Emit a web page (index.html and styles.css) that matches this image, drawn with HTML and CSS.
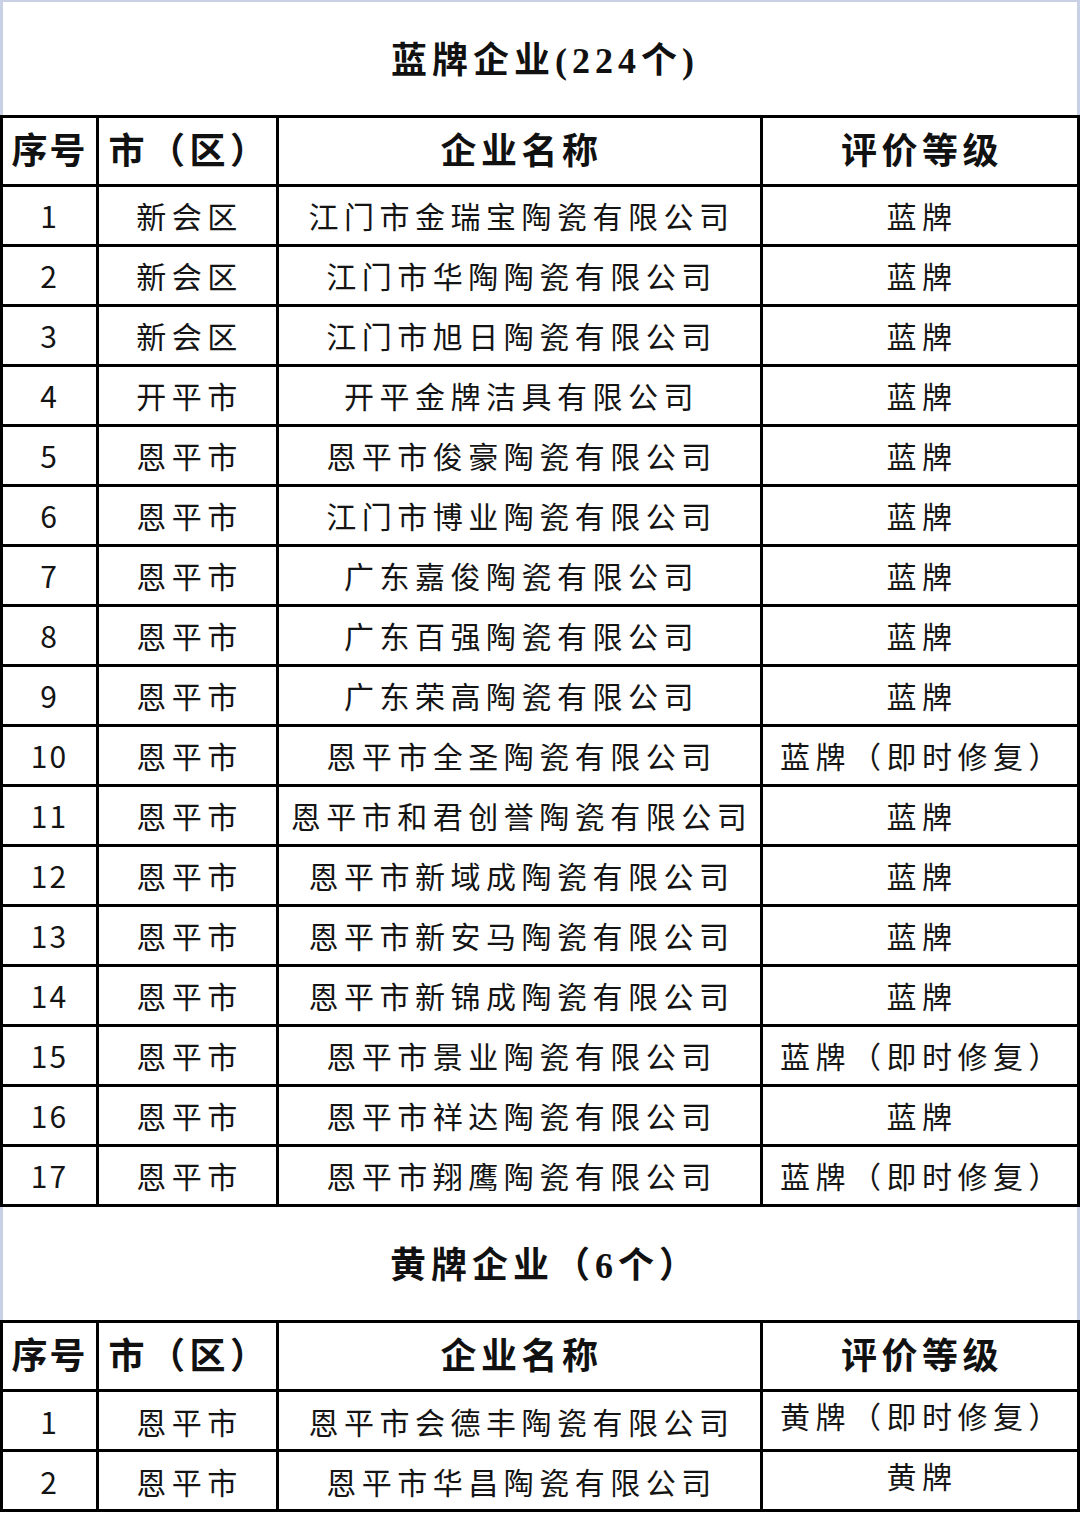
FILE: index.html
```html
<!DOCTYPE html>
<html lang="zh-CN">
<head>
<meta charset="utf-8">
<title>蓝牌企业 / 黄牌企业</title>
<link rel="stylesheet" href="styles.css">
</head>
<body>
<table class="sheet">
  <colgroup>
    <col class="c-no"><col class="c-city"><col class="c-name"><col class="c-grade">
  </colgroup>
  <tbody>
    <tr class="title-row"><td colspan="4" class="title">蓝牌企业(224个)</td></tr>
    <tr class="head-row"><th>序号</th><th>市（区）</th><th>企业名称</th><th>评价等级</th></tr>
    <tr><td class="num">1</td><td>新会区</td><td>江门市金瑞宝陶瓷有限公司</td><td>蓝牌</td></tr>
    <tr><td class="num">2</td><td>新会区</td><td>江门市华陶陶瓷有限公司</td><td>蓝牌</td></tr>
    <tr><td class="num">3</td><td>新会区</td><td>江门市旭日陶瓷有限公司</td><td>蓝牌</td></tr>
    <tr><td class="num">4</td><td>开平市</td><td>开平金牌洁具有限公司</td><td>蓝牌</td></tr>
    <tr><td class="num">5</td><td>恩平市</td><td>恩平市俊豪陶瓷有限公司</td><td>蓝牌</td></tr>
    <tr><td class="num">6</td><td>恩平市</td><td>江门市博业陶瓷有限公司</td><td>蓝牌</td></tr>
    <tr><td class="num">7</td><td>恩平市</td><td>广东嘉俊陶瓷有限公司</td><td>蓝牌</td></tr>
    <tr><td class="num">8</td><td>恩平市</td><td>广东百强陶瓷有限公司</td><td>蓝牌</td></tr>
    <tr><td class="num">9</td><td>恩平市</td><td>广东荣高陶瓷有限公司</td><td>蓝牌</td></tr>
    <tr><td class="num">10</td><td>恩平市</td><td>恩平市全圣陶瓷有限公司</td><td>蓝牌（即时修复）</td></tr>
    <tr><td class="num">11</td><td>恩平市</td><td>恩平市和君创誉陶瓷有限公司</td><td>蓝牌</td></tr>
    <tr><td class="num">12</td><td>恩平市</td><td>恩平市新域成陶瓷有限公司</td><td>蓝牌</td></tr>
    <tr><td class="num">13</td><td>恩平市</td><td>恩平市新安马陶瓷有限公司</td><td>蓝牌</td></tr>
    <tr><td class="num">14</td><td>恩平市</td><td>恩平市新锦成陶瓷有限公司</td><td>蓝牌</td></tr>
    <tr><td class="num">15</td><td>恩平市</td><td>恩平市景业陶瓷有限公司</td><td>蓝牌（即时修复）</td></tr>
    <tr><td class="num">16</td><td>恩平市</td><td>恩平市祥达陶瓷有限公司</td><td>蓝牌</td></tr>
    <tr><td class="num">17</td><td>恩平市</td><td>恩平市翔鹰陶瓷有限公司</td><td>蓝牌（即时修复）</td></tr>
    <tr class="title-row title-row-2"><td colspan="4" class="title">黄牌企业（6个）</td></tr>
    <tr class="head-row"><th>序号</th><th>市（区）</th><th>企业名称</th><th>评价等级</th></tr>
    <tr class="y-row"><td class="num">1</td><td>恩平市</td><td>恩平市会德丰陶瓷有限公司</td><td class="hi">黄牌（即时修复）</td></tr>
    <tr class="y-row"><td class="num">2</td><td>恩平市</td><td>恩平市华昌陶瓷有限公司</td><td class="hi">黄牌</td></tr>
  </tbody>
</table>
</body>
</html>
```

FILE: styles.css
```css
html, body {
  margin: 0;
  padding: 0;
  background: #ffffff;
}

.sheet {
  table-layout: fixed;
  border-collapse: collapse;
  font-family: "Noto Sans CJK SC", "Noto Sans", sans-serif;
  color: #141414;
}

.c-no { width: 96px; }
.c-city { width: 180px; }
.c-name { width: 484px; }
.c-grade { width: 317px; }

.sheet td,
.sheet th {
  border: 3px solid #000;
  padding: 0;
  text-align: center;
  vertical-align: middle;
  white-space: nowrap;
  overflow: visible;
  box-sizing: border-box;
}

.sheet td {
  font-size: 30px;
  font-weight: 400;
  letter-spacing: 5.5px;
  height: 60px;
  line-height: 34px;
  padding-left: 4px;
}

.sheet td.num {
  letter-spacing: 2px;
  padding-left: 0;
}

.sheet .title-row td.title {
  height: 115px;
  border-left: 3px solid #c9d2e4;
  border-right: 3px solid #c9d2e4;
  border-top: 2px solid #c9d2e4;
  font-family: "Liberation Serif", "Noto Sans CJK SC", serif;
  font-weight: 700;
  font-size: 36px;
  letter-spacing: 5px;
  color: #111;
  padding-top: 6px;
  padding-left: 10px;
}

.sheet .title-row-2 td.title {
  height: 116px;
  padding-top: 6px;
}

.sheet .head-row th {
  height: 69px;
  font-size: 36px;
  font-weight: 700;
  letter-spacing: 4.5px;
  color: #111;
  padding-bottom: 6px;
  padding-left: 4px;
}

.sheet .head-row th:first-child {
  letter-spacing: 2px;
  padding-left: 0;
}

.sheet .y-row td {
  vertical-align: top;
  padding-top: 12px;
}

.sheet .y-row td.hi {
  padding-top: 6px;
}
```
